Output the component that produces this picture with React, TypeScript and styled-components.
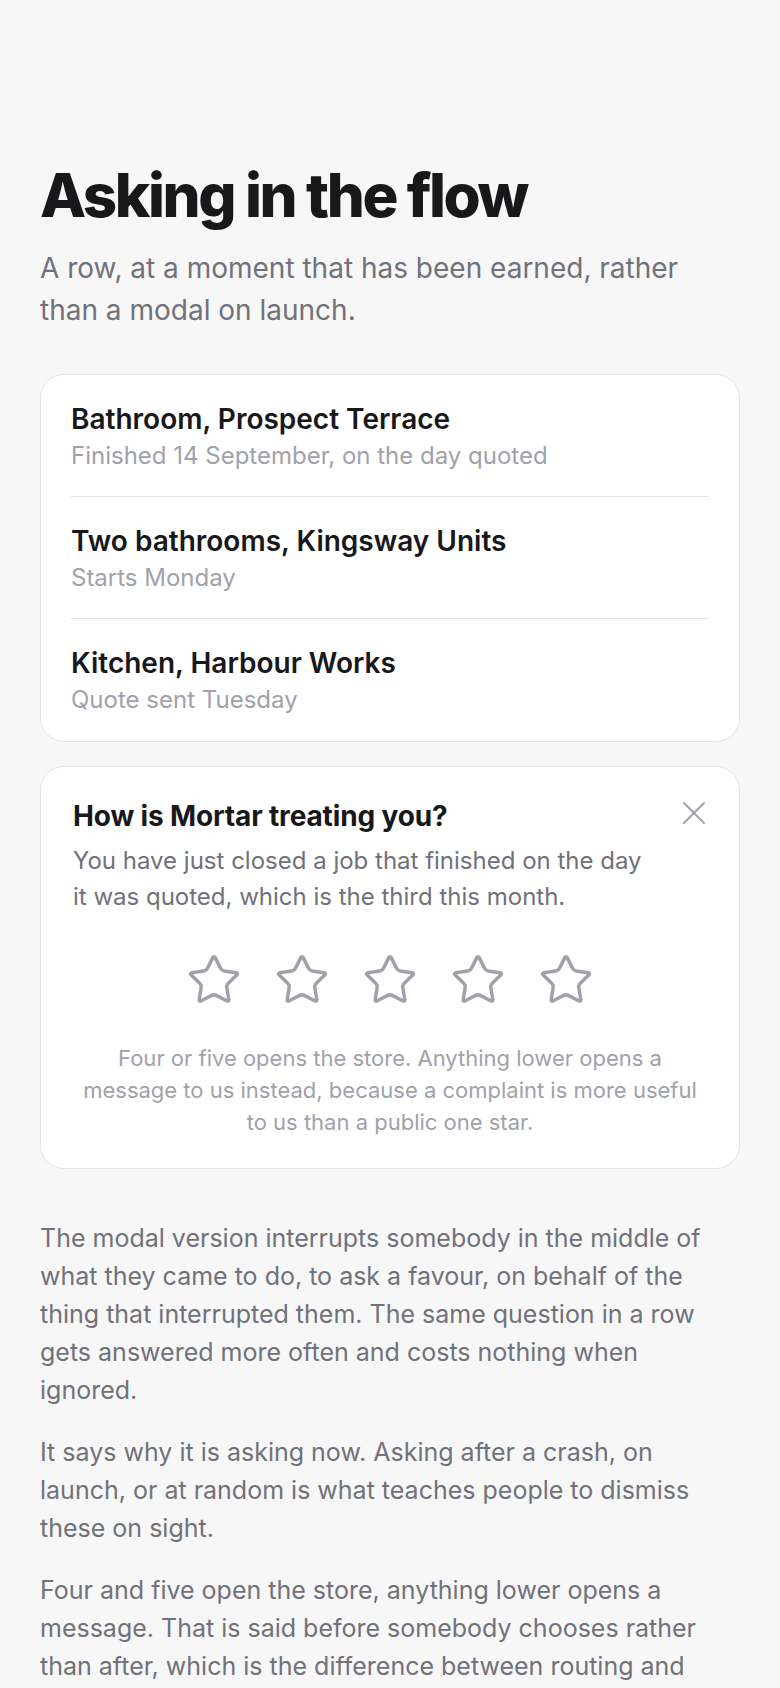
import { Star } from 'lucide-react';
import styled, { createGlobalStyle } from 'styled-components';

const GlobalStyle = createGlobalStyle`
    html, body {
        margin: 0;
        padding: 0;
        background: #f7f7f8;
    }
    body {
        font-family: Inter, "Noto Sans", "Liberation Sans", sans-serif;
        -webkit-font-smoothing: antialiased;
    }
`

const Page = styled.main`
    padding: 162px 40px 80px;
    display: flex;
    flex-direction: column;
`

const Title = styled.h1`
    margin: 0;
    font-size: 60px;
    line-height: 1.1;
    font-weight: 800;
    letter-spacing: -0.04em;
    color: #18181b;
`

const Lede = styled.p`
    margin: 19px 0 0;
    font-size: 28px;
    line-height: 1.5;
    color: #71717a;
`

const Card = styled.section<{ $gap: number }>`
    margin-top: ${p => p.$gap}px;
    background: #fff;
    border: 1px solid #e4e4e7;
    border-radius: 24px;
`

const JobList = styled(Card)`
    padding: 0 30px;
`

const JobRow = styled.div`
    padding: 28px 0 24px;
    border-top: 1px solid #e4e4e7;

    &:first-child {
        border-top: none;
    }
`

const JobName = styled.div`
    font-size: 28px;
    line-height: 1.2;
    font-weight: 600;
    color: #18181b;
`

const JobMeta = styled.div`
    margin-top: 2px;
    font-size: 24px;
    line-height: 1.4;
    color: #a1a1aa;
`

const AskCard = styled(Card)`
    padding: 33px 32px 30px;
`

const AskHeader = styled.div`
    display: flex;
    align-items: flex-start;
    gap: 24px;
`

const AskText = styled.div`
    flex: 1;
`

const AskTitle = styled.h2`
    margin: 0;
    font-size: 28px;
    line-height: 1.2;
    font-weight: 700;
    letter-spacing: -0.005em;
    color: #18181b;
`

const AskBody = styled.p`
    margin: 10px 0 0;
    font-size: 24px;
    line-height: 1.48;
    color: #71717a;
`

const CloseButton = styled.button`
    width: 26px;
    height: 26px;
    padding: 0;
    border: none;
    background: none;
    color: #a1a1aa;
    display: flex;
    cursor: pointer;
`

const Stars = styled.div`
    margin-top: 38px;
    display: flex;
    justify-content: center;
    gap: 32px;
`

const StarButton = styled.button`
    padding: 0;
    border: none;
    background: none;
    color: #a1a1aa;
    display: flex;
    cursor: pointer;
`

const Footnote = styled.p`
    margin: 35px 0 0;
    padding: 0 8px;
    font-size: 22px;
    line-height: 1.44;
    text-align: center;
    color: #a1a1aa;
`

const Prose = styled.div`
    margin-top: 50px;
    display: flex;
    flex-direction: column;
    gap: 24px;

    p {
        margin: 0;
        font-size: 25px;
        line-height: 1.52;
        color: #71717a;
    }
`

const jobs = [
    { name: 'Bathroom, Prospect Terrace', meta: 'Finished 14 September, on the day quoted' },
    { name: 'Two bathrooms, Kingsway Units', meta: 'Starts Monday' },
    { name: 'Kitchen, Harbour Works', meta: 'Quote sent Tuesday' },
]

function CloseIcon() {
    return (
        <svg width='26' height='26' viewBox='0 0 26 26' fill='none' stroke='currentColor' strokeWidth='2' strokeLinecap='round'>
            <path d='M3 3l20 20M23 3L3 23' />
        </svg>
    )
}

export default function App() {
    return (
        <>
            <GlobalStyle />
            <Page>
                <Title>Asking in the flow</Title>
                <Lede>A row, at a moment that has been earned, rather than a modal on launch.</Lede>

                <JobList $gap={43}>
                    {jobs.map(job => (
                        <JobRow key={job.name}>
                            <JobName>{job.name}</JobName>
                            <JobMeta>{job.meta}</JobMeta>
                        </JobRow>
                    ))}
                </JobList>

                <AskCard $gap={24}>
                    <AskHeader>
                        <AskText>
                            <AskTitle>How is Mortar treating you?</AskTitle>
                            <AskBody>You have just closed a job that finished on the day it was quoted, which is the third this month.</AskBody>
                        </AskText>
                        <CloseButton aria-label='Dismiss'>
                            <CloseIcon />
                        </CloseButton>
                    </AskHeader>
                    <Stars>
                        {[1, 2, 3, 4, 5].map(n => (
                            <StarButton key={n} aria-label={`${n} stars`}>
                                <Star size={56} strokeWidth={1.5} />
                            </StarButton>
                        ))}
                    </Stars>
                    <Footnote>Four or five opens the store. Anything lower opens a message to us instead, because a complaint is more useful to us than a public one star.</Footnote>
                </AskCard>

                <Prose>
                    <p>The modal version interrupts somebody in the middle of what they came to do, to ask a favour, on behalf of the thing that interrupted them. The same question in a row gets answered more often and costs nothing when ignored.</p>
                    <p>It says why it is asking now. Asking after a crash, on launch, or at random is what teaches people to dismiss these on sight.</p>
                    <p>Four and five open the store, anything lower opens a message. That is said before somebody chooses rather than after, which is the difference between routing and gating.</p>
                </Prose>
            </Page>
        </>
    );
}
